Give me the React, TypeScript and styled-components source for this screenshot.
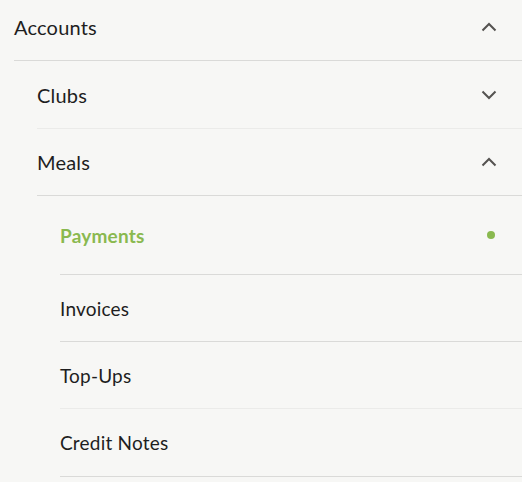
import styled, { createGlobalStyle } from "styled-components";

const GlobalStyle = createGlobalStyle`
  html, body {
    margin: 0;
    padding: 0;
    background: #f7f7f5;
  }
  body {
    font-family: Lato, "Liberation Sans", sans-serif;
    color: #222;
  }
`;

const Nav = styled.nav`
  width: 522px;
  padding-left: 14px;
  box-sizing: border-box;
  overflow: hidden;
`;

const List = styled.ul<{ $indent?: number }>`
  list-style: none;
  margin: 0;
  padding: 0 0 0 ${(p) => p.$indent ?? 0}px;
`;

const Row = styled.div<{ $height: number; $light?: boolean; $size: number; $lift?: number }>`
  display: flex;
  align-items: center;
  justify-content: space-between;
  box-sizing: border-box;
  height: ${(p) => p.$height}px;
  padding: 0 25px ${(p) => p.$lift ?? 0}px 0;
  border-bottom: 1px solid ${(p) => (p.$light ? "#ebebe9" : "#dadad8")};
  font-size: ${(p) => p.$size}px;
  cursor: pointer;
`;

const Label = styled.span<{ $active?: boolean }>`
  color: ${(p) => (p.$active ? "#8ab94f" : "#1e1e1e")};
  font-weight: ${(p) => (p.$active ? 700 : 400)};
  letter-spacing: 0.2px;
`;

const Dot = styled.span`
  width: 8px;
  height: 8px;
  margin-right: 2px;
  border-radius: 50%;
  background: #8ab94f;
`;

const Chevron = ({ up }: { up?: boolean }) => (
  <svg width="16" height="10" viewBox="0 0 16 10" fill="none">
    <path
      d={up ? "M1.5 8.5 L8 2 L14.5 8.5" : "M1.5 1.5 L8 8 L14.5 1.5"}
      stroke="#555350"
      strokeWidth="2"
    />
  </svg>
);

const subItems = [
  { label: "Payments", active: true, height: 79 },
  { label: "Invoices", height: 67 },
  { label: "Top-Ups", height: 67, light: true },
  { label: "Credit Notes", height: 68 },
];

export default function App() {
  return (
    <>
      <GlobalStyle />
      <Nav>
        <List>
          <li>
            <Row $height={61} $size={20} $lift={6}>
              <Label>Accounts</Label>
              <Chevron up />
            </Row>
            <List $indent={23}>
              <li>
                <Row $height={68} $size={20} $light>
                  <Label>Clubs</Label>
                  <Chevron />
                </Row>
              </li>
              <li>
                <Row $height={67} $size={20}>
                  <Label>Meals</Label>
                  <Chevron up />
                </Row>
                <List $indent={23}>
                  {subItems.map((item) => (
                    <li key={item.label}>
                      <Row $height={item.height} $size={19} $light={item.light}>
                        <Label $active={item.active}>{item.label}</Label>
                        {item.active && <Dot />}
                      </Row>
                    </li>
                  ))}
                </List>
              </li>
            </List>
          </li>
        </List>
      </Nav>
    </>
  );
}
